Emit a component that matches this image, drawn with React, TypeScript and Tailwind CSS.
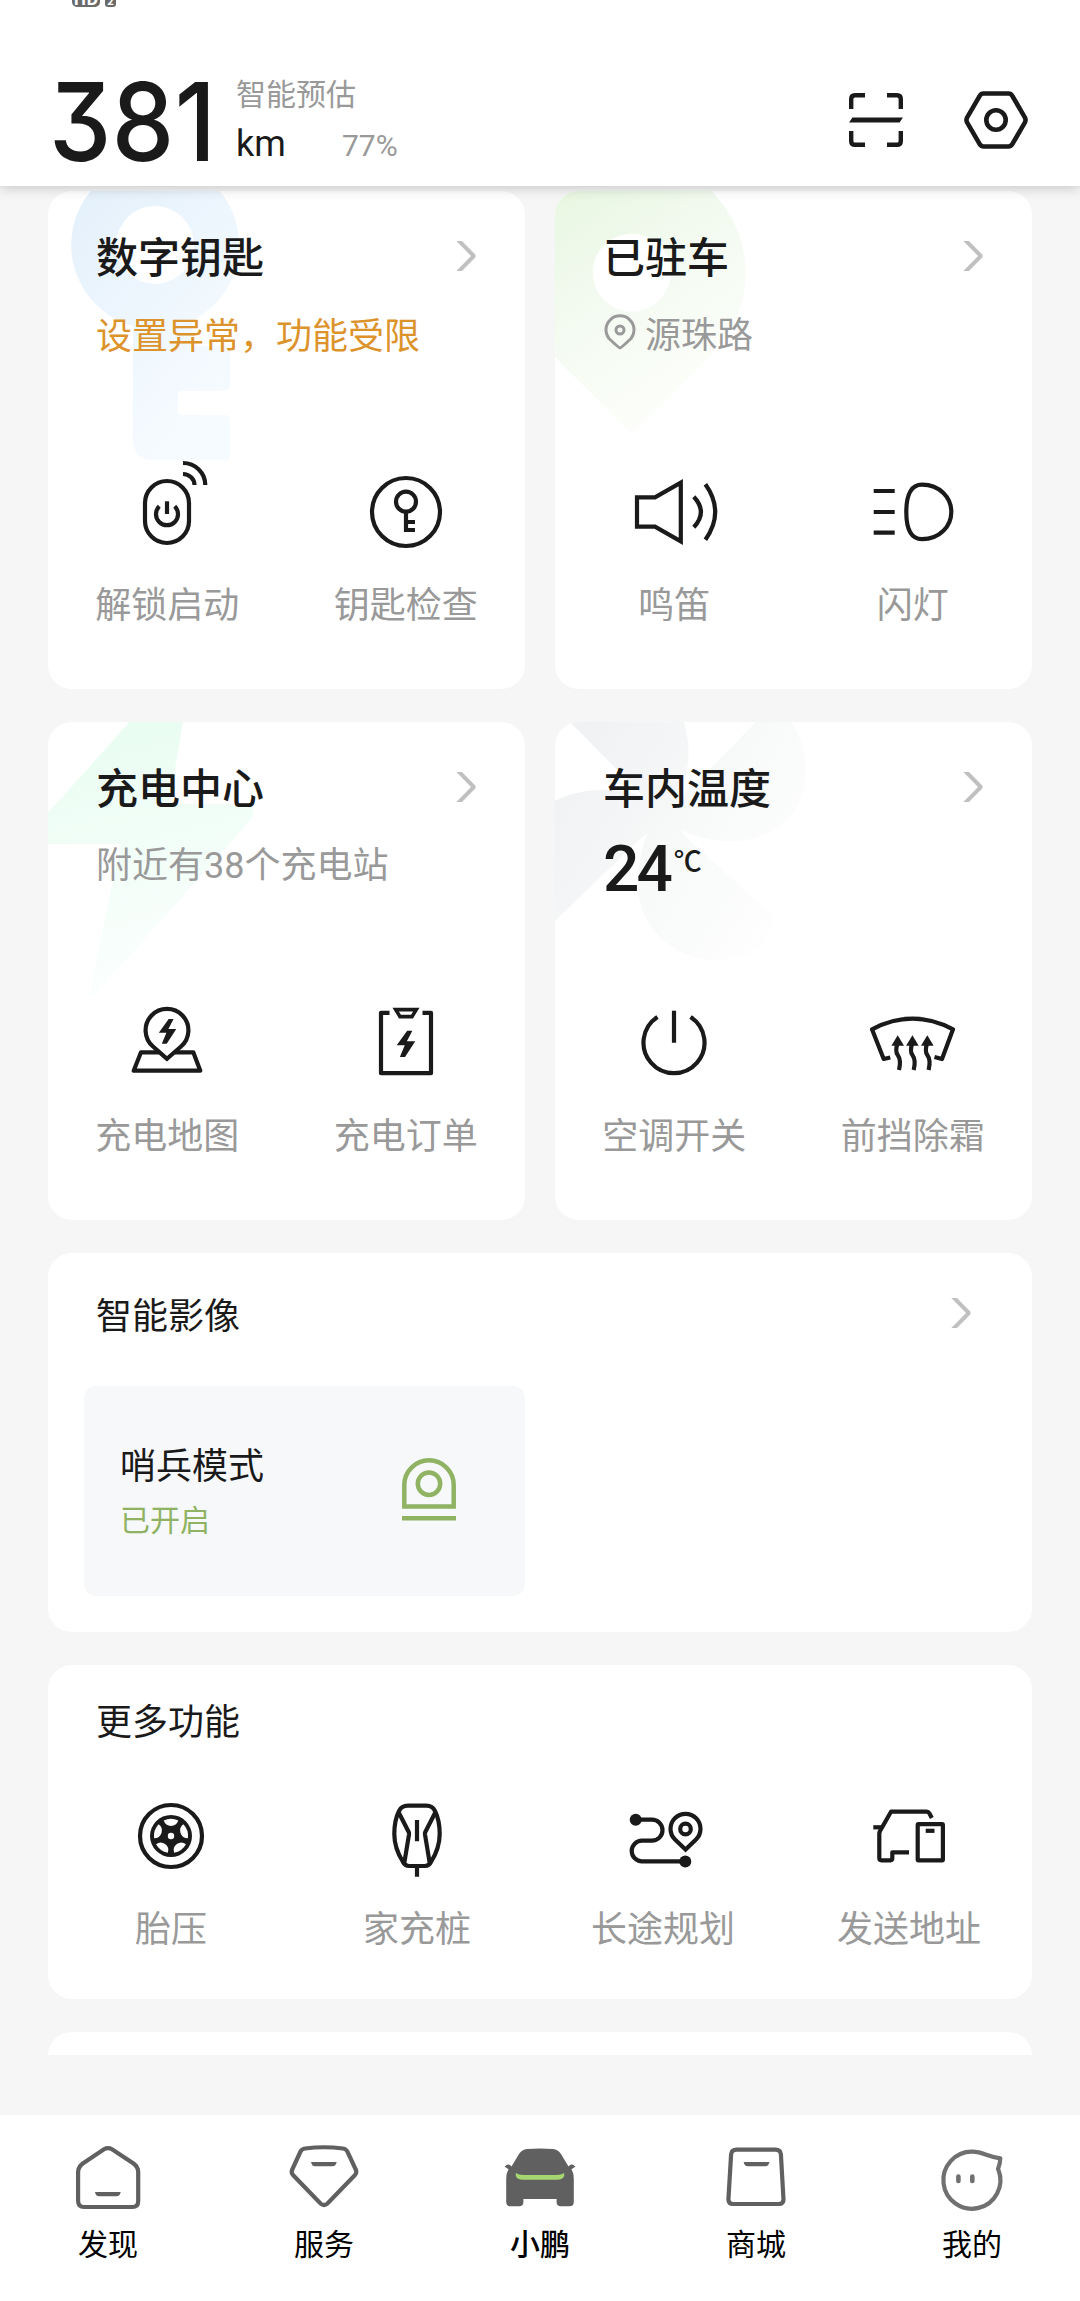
import type { ReactNode } from "react";

type Action = {
  label: string;
  icon: ReactNode;
};

const BOLT = "M49.7 24H54.6L49.4 34H57.3L47.7 48.7H42.8L47.4 37.7H39.8Z";

function Icon({ children }: { children: ReactNode }) {
  return (
    <svg
      viewBox="0 0 96 96"
      fill="none"
      stroke="#1a1a1a"
      strokeWidth="4.2"
      className="w-24 h-24 shrink-0 overflow-visible"
    >
      {children}
    </svg>
  );
}

function Chevron() {
  return (
    <svg viewBox="0 0 20 30" className="w-5 h-[30px] shrink-0">
      <path d="M0.3 0H6L19.500 13.800V16.200L6 30H0.3L15 15Z" fill="#c0c0c0" />
    </svg>
  );
}

/* Faded artwork behind the card titles */
function KeyArt() {
  return (
    <svg viewBox="0 0 477 498" className="absolute inset-0 w-full h-full">
      <defs>
        <linearGradient id="key-art" x1="0" y1="0" x2="0.6" y2="1">
          <stop offset="0%" stopColor="#e2effa" />
          <stop offset="60%" stopColor="#eff7fe" />
          <stop offset="100%" stopColor="#f6fbff" />
        </linearGradient>
      </defs>
      <path
        fillRule="evenodd"
        fill="url(#key-art)"
        d="M107 -30A84 84 0 0 1 144 129.5V155H178Q182 155 182 159V195Q182 200 177 200H134Q129.500 200 129.500 204.500V219Q129.500 224 134 224H177Q182 224 182 229V264Q182 269 177 269H106Q85 269 85 248V135A84 84 0 0 1 107 -30ZM107 15A39 39 0 1 0 107 93A39 39 0 1 0 107 15Z"
      />
    </svg>
  );
}

function PinArt() {
  return (
    <svg viewBox="0 0 477 498" className="absolute inset-0 w-full h-full">
      <defs>
        <linearGradient id="pin-art" x1="0" y1="0" x2="0.55" y2="1">
          <stop offset="0%" stopColor="#e3f5da" />
          <stop offset="50%" stopColor="#f2faef" />
          <stop offset="100%" stopColor="#fdfefb" />
        </linearGradient>
      </defs>
      <path
        fillRule="evenodd"
        fill="url(#pin-art)"
        d="M-4 162.300A114 114 0 1 1 157.300 162.300L80 239.500Q76.700 242 73.500 239.500ZM76.700 42.700A39 39 0 1 0 76.700 120.700A39 39 0 1 0 76.700 42.700Z"
      />
    </svg>
  );
}

function BoltArt() {
  return (
    <svg viewBox="0 0 477 498" className="absolute inset-0 w-full h-full">
      <defs>
        <linearGradient id="bolt-art" x1="0.3" y1="0" x2="0.5" y2="1">
          <stop offset="0%" stopColor="#e9fdf2" />
          <stop offset="60%" stopColor="#f4fef9" />
          <stop offset="100%" stopColor="#fdffff" />
        </linearGradient>
      </defs>
      <path
        fill="url(#bolt-art)"
        d="M81.500 0H135L121 82H202Q208 88 203 97L50 270Q42 279 41 272L73 122H-10V102Z"
      />
    </svg>
  );
}

function FanArt() {
  return (
    <svg viewBox="0 0 477 498" className="absolute inset-0 w-full h-full">
      <defs>
        <linearGradient id="fan-art" x1="0" y1="0.2" x2="1" y2="0.8">
          <stop offset="0%" stopColor="#eff1f3" />
          <stop offset="45%" stopColor="#f7f8f8" />
          <stop offset="100%" stopColor="#ffffff" />
        </linearGradient>
      </defs>
      <path
        fill="url(#fan-art)"
        d="M15 0H129C137 28 134 54 122 78L148 54L201 0H237C256 34 254 64 240 88C216 124 164 126 126 108L130 114L218 194C222 208 206 236 166 238C118 240 80 204 83 156C84 140 87 126 92 112L86 116L-2 201V80C24 66 58 64 88 74Z"
      />
    </svg>
  );
}

const KEY_ACTIONS: Action[] = [
  {
    label: "解锁启动",
    icon: (
      <Icon>
        <rect x="26" y="17" width="44" height="62" rx="22" />
        <path d="M40.300 42.300A11 11 0 1 0 55.700 42.300" />
        <path d="M48 37.300V50" />
        <path d="M64 10A11.500 11 0 0 1 75.500 21M64 -1A22.300 22 0 0 1 86.300 21" />
      </Icon>
    ),
  },
  {
    label: "钥匙检查",
    icon: (
      <Icon>
        <circle cx="48" cy="48" r="34" />
        <circle cx="48" cy="37.7" r="10" />
        <path d="M48 47.700V66H57M48 58H57" />
      </Icon>
    ),
  },
];

const PARK_ACTIONS: Action[] = [
  {
    label: "鸣笛",
    icon: (
      <Icon>
        <path d="M11 33.300H29L54.800 18.700V77.300L29 62.700H11Z" />
        <path d="M67.800 32.700Q82 48 67.800 63.300M79.400 20.300Q99 48 79.400 75.700" />
      </Icon>
    ),
  },
  {
    label: "闪灯",
    icon: (
      <Icon>
        <path d="M8.700 27H29.700M8.700 48H29.700M8.700 68.700H29.700" />
        <path d="M57 20.700C75 20.700 86.300 34 86.300 48S75 75.200 57 75.200C47 75.200 41.300 67 41.300 48S47 20.700 57 20.700Z" />
      </Icon>
    ),
  },
];

const CHARGE_ACTIONS: Action[] = [
  {
    label: "充电地图",
    icon: (
      <Icon>
        <path d="M48 63.800L34 51.500A21.400 21.400 0 1 1 62 51.500Z" />
        <path
          d="M40 57.300H22L14.700 75.700H81.300L74.300 57.300H56"
          strokeLinejoin="round"
        />
        <path d={BOLT} fill="#1a1a1a" stroke="none" />
      </Icon>
    ),
  },
  {
    label: "充电订单",
    icon: (
      <Icon>
        <path d="M31.500 17.800H23V78.200H73V17.800H64.500" strokeLinejoin="round" />
        <path d="M37.700 14.600H58.300L54 21.600H42Z" strokeWidth="3.600" />
        <path
          d={BOLT}
          fill="#1a1a1a"
          stroke="none"
          transform="translate(-3.500 10.300) scale(1.060)"
        />
      </Icon>
    ),
  },
];

const CLIMATE_ACTIONS: Action[] = [
  {
    label: "空调开关",
    icon: (
      <Icon>
        <path d="M31.500 22A30.500 30.500 0 1 0 64.500 22" />
        <path d="M48 15.700V47.700" />
      </Icon>
    ),
  },
  {
    label: "前挡除霜",
    icon: (
      <Icon>
        <path
          d="M25.300 62.500L18.700 64L7 34.300Q47.500 13 88 34.300L77 64L69.500 62"
          strokeLinejoin="round"
        />
        {[32.7, 47.4, 62.3].map((x) => (
          <g key={x} transform={`translate(${x} 0)`}>
            <path d="M0 48C-2.500 55 -1.500 58 0 60S3.500 66 1.300 75" />
            <path d="M0 40.300L6.300 50.700H-6.300Z" fill="#1a1a1a" stroke="none" />
          </g>
        ))}
      </Icon>
    ),
  },
];

const MORE_ACTIONS: Action[] = [
  {
    label: "胎压",
    icon: (
      <Icon>
        <circle cx="48" cy="48" r="31" />
        <circle cx="48" cy="48" r="21" fill="#1a1a1a" stroke="none" />
        {[0, 72, 144, 216, 288].map((deg) => (
          <path
            key={deg}
            d="M40.700 32.600A17 17 0 0 1 55.300 32.600Q53.500 38 48 38Q42.500 38 40.700 32.600Z"
            transform={`rotate(${deg} 48 48)`}
            fill="#ffffff"
            stroke="none"
          />
        ))}
        <circle cx="48" cy="48" r="3.2" fill="#ffffff" stroke="none" />
      </Icon>
    ),
  },
  {
    label: "家充桩",
    icon: (
      <Icon>
        <path d="M39 17.700H57.500Q63.500 17.700 66 23C69.500 30 70.700 37 70.700 46C70.700 55 67 66 62 74Q60 78 56 78H40Q36 78 34 74C29 66 25.300 55 25.300 46C25.300 37 26.500 30 30 23Q32.500 17.700 39 17.700Z" />
        <path d="M30 25L39.700 44Q40.200 45 40 46.500L35.300 75M66 25L56.300 44Q55.800 45 56 46.500L60.700 75" />
        <path d="M48 32V53.300M48 78V88.700" />
      </Icon>
    ),
  },
  {
    label: "长途规划",
    icon: (
      <Icon>
        <path d="M20.700 31.700H37A10.500 10.500 0 0 1 37 52.700H27A10.300 10.300 0 0 0 27 73.300H70.300" />
        <circle cx="20.7" cy="31.7" r="6" fill="#1a1a1a" stroke="none" />
        <circle cx="70.3" cy="73.5" r="6" fill="#1a1a1a" stroke="none" />
        <path d="M70.500 61.500L60 51.500A15 15 0 1 1 81 51.500Z" />
        <circle cx="70.5" cy="41" r="5.300" />
      </Icon>
    ),
  },
  {
    label: "发送地址",
    icon: (
      <Icon>
        <path d="M12.300 39.300H21" />
        <path
          d="M70.800 30L68.500 25.500Q67.500 23.700 65.500 23.700H30L19 43Q18.300 44.500 18.300 46V70Q18.300 72.300 20.500 72.300H29.500Q31.300 72.300 31.300 70V64.300H48"
          strokeLinejoin="round"
        />
        <rect x="56.7" y="36.2" width="25.200" height="36.100" rx="0.800" />
        <path d="M64.700 42.800H73.500" />
      </Icon>
    ),
  },
];

function ActionItem({ label, icon }: Action) {
  return (
    <div className="flex flex-col items-center">
      {icon}
      <span className="mt-[18px] h-12 leading-[48px] text-[36px] text-[#999999] whitespace-nowrap">
        {label}
      </span>
    </div>
  );
}

type CardProps = {
  title: string;
  art: ReactNode;
  actions: Action[];
  children: ReactNode;
};

function FeatureCard({ title, art, actions, children }: CardProps) {
  return (
    <section className="relative h-[498px] rounded-[24px] bg-white overflow-hidden">
      {art}
      <div className="relative">
        <div className="flex items-center justify-between h-[60px] mt-[35px] pl-12 pr-[49px]">
          <h2 className="-mt-[2px] text-[42px] leading-[60px] font-medium text-[#1a1a1a]">
            {title}
          </h2>
          <Chevron />
        </div>
        <div className="flex items-center h-12 mt-[23px] pl-12 text-[36px] leading-[48px] text-[#999999]">
          {children}
        </div>
        <div className="grid grid-cols-2 mt-[107px]">
          {actions.map((action) => (
            <ActionItem key={action.label} {...action} />
          ))}
        </div>
      </div>
    </section>
  );
}

const TABS = [
  {
    label: "发现",
    icon: (
      <>
        <path d="M32 6.300Q36 4 40 6.300L61.500 20.500Q66.200 24 66.200 29V58Q66.200 64 60.500 64H12Q6.100 64 6.100 58V29Q6.100 24 10.800 20.500Z" />
        <path d="M23 49H48.700Q47.800 53.300 44.500 53.300H27Q23.800 53.300 23 49Z" fill="#606060" stroke="none" />
      </>
    ),
  },
  {
    label: "服务",
    icon: (
      <>
        <path d="M17 5.500Q36 3 55 5.500Q58.200 6 59.300 8.500L68 27Q69 30 67 32L39.500 60.500Q36 63.500 32.500 60.500L5 32Q3 30 4 27L12.500 8.500Q13.700 6 17 5.500Z" />
        <path d="M23 19H48.700Q47.800 23.200 44.500 23.200H27Q23.800 23.200 23 19Z" fill="#606060" stroke="none" />
      </>
    ),
  },
  {
    label: "小鹏",
    active: true,
    icon: (
      <>
        <path
          d="M23 6Q36 4.800 49 6Q54 6.500 57 11L64.500 23.500Q66 21 68.500 21.500L71.500 23.500L67.500 26.200Q69.800 30 69.800 36V59Q69.800 63.300 65.500 63.300H57Q52.600 63.300 52.600 59V56H19.400V59Q19.400 63.300 15 63.300H6.500Q2.200 63.300 2.200 59V36Q2.200 30 4.500 26.200L0.500 23.500L3.500 21.500Q6 21 7.500 23.500L15 11Q18 6.500 23 6Z"
          fill="#606060"
          stroke="none"
        />
        <path d="M11.800 30Q15 32 19 32H53Q57 32 60.200 30V33Q59 36.700 53 36.700H19Q13 36.700 11.800 33Z" fill="#a5d670" stroke="none" />
      </>
    ),
  },
  {
    label: "商城",
    icon: (
      <>
        <path d="M16.500 6.700H55.500Q60.500 6.700 60.900 11.500L63.500 56.500Q63.500 61 59 61H13Q8.400 61 8.400 56.500L11.100 11.500Q11.500 6.700 16.500 6.700Z" />
        <path d="M23.600 19H49.500Q48.600 23.200 45.300 23.200H27.600Q24.500 23.200 23.600 19Z" fill="#606060" stroke="none" />
      </>
    ),
  },
  {
    label: "我的",
    icon: (
      <>
        <path
          d="M62.500 27A28.500 28.500 0 1 1 36.500 8.700C47 8.700 52 14 64.300 15.300Q64.300 20 62 26Z"
          stroke="#707070"
          strokeLinejoin="round"
        />
        <path d="M22.400 33.500V38M36.300 33.500V38" stroke="#707070" strokeWidth="4.600" strokeLinecap="round" />
      </>
    ),
  },
];

function Header() {
  return (
    <header className="relative z-10 h-[186px] shrink-0 bg-white shadow-[0_2px_12px_rgba(0,0,0,0.2)]">
      {/* Remainder of the system status bar */}
      <div className="flex h-[7px] items-end gap-[5px] overflow-hidden pl-[72px] text-white font-bold">
        <span className="w-7 h-6 shrink-0 rounded-[5px] bg-[#6b6b6b] text-center text-[17px] leading-[30px]">
          HD
        </span>
        <span className="w-[11px] h-5 shrink-0 rounded-[3px] bg-[#6b6b6b] text-center text-[11px] leading-[27px]">
          2
        </span>
      </div>
      <div className="flex items-center justify-between pl-[49px] pr-[52px] mt-[65px]">
        <div className="flex">
          <span className="w-[187px] h-[95px] leading-[98px] origin-left scale-x-[0.91] font-['Inter'] text-[109px] font-medium tracking-[0.5px] text-[#1a1a1a] [font-feature-settings:'cv09']">
            381
          </span>
          <div className="flex flex-col">
            <span className="h-10 leading-[40px] text-[30px] text-[#999999]">
              智能预估
            </span>
            <div className="flex items-baseline mt-[9px] h-[46px] leading-[46px] font-['Roboto']">
              <span className="w-[106px] text-[36px] text-[#1a1a1a]">km</span>
              <span className="text-[30px] text-[#999999]">77%</span>
            </div>
          </div>
        </div>
        <div className="flex items-center gap-[61px]">
          <svg viewBox="0 0 54 54" fill="none" stroke="#1a1a1a" strokeWidth="4.400" className="w-[54px] h-[54px]">
            <path d="M2.200 16V6Q2.200 2.200 6 2.200H16M38 2.200H48Q51.800 2.200 51.800 6V16M51.800 38V48Q51.800 51.800 48 51.800H38M16 51.800H6Q2.200 51.800 2.200 48V38" />
            <path d="M3.500 24.500H54L50.500 29.500H0Z" fill="#1a1a1a" stroke="none" />
          </svg>
          <svg viewBox="0 0 64 58" fill="none" stroke="#1a1a1a" strokeWidth="4.600" className="w-16 h-[58px]">
            <path d="M19.500 2.500H44.500Q47 2.500 48.300 4.800L61 26.700Q62 29 61 31.300L48.300 53.200Q47 55.500 44.500 55.500H19.500Q17 55.500 15.700 53.200L3 31.300Q2 29 3 26.700L15.700 4.800Q17 2.500 19.500 2.500Z" />
            <circle cx="32" cy="29" r="9.700" />
          </svg>
        </div>
      </div>
    </header>
  );
}

function TabBar() {
  return (
    <nav className="grid grid-cols-5 h-[186px] shrink-0 bg-white pt-7">
      {TABS.map((tab) => (
        <div key={tab.label} className="flex flex-col items-center">
          <svg viewBox="0 0 72 72" fill="none" stroke="#606060" strokeWidth="4.200" className="w-[72px] h-[72px]">
            {tab.icon}
          </svg>
          <span
            className={
              tab.active
                ? "mt-[6px] text-[30px] leading-[42px] font-medium text-black"
                : "mt-[6px] text-[30px] leading-[42px] text-black"
            }
          >
            {tab.label}
          </span>
        </div>
      ))}
    </nav>
  );
}

export default function App() {
  return (
    <div className="flex flex-col w-[1080px] h-[2301px] overflow-hidden bg-[#f6f6f6] font-['Noto_Sans_CJK_SC',sans-serif]">
      <Header />

      <main className="flex flex-col gap-[33px] h-[1869px] mb-[60px] px-12 pt-[5px] overflow-hidden">
        <div className="grid grid-cols-2 gap-x-[30px] gap-y-[33px] shrink-0">
          <FeatureCard title="数字钥匙" art={<KeyArt />} actions={KEY_ACTIONS}>
            <span className="text-[#dc932c]">设置异常，功能受限</span>
          </FeatureCard>
          <FeatureCard title="已驻车" art={<PinArt />} actions={PARK_ACTIONS}>
            <svg viewBox="0 0 32 36" fill="none" stroke="#999999" strokeWidth="3" className="w-8 h-9 ml-[1px] mr-[9px] mb-[2px]">
              <path d="M16 34Q15 34 5 24.500A14 14 0 1 1 27 24.500Q17 34 16 34Z" />
              <circle cx="16" cy="16" r="4" />
            </svg>
            <span className="-mt-[2px]">源珠路</span>
          </FeatureCard>
          <FeatureCard title="充电中心" art={<BoltArt />} actions={CHARGE_ACTIONS}>
            <span>
              附近有<span className="font-['Roboto']">38</span>个充电站
            </span>
          </FeatureCard>
          <FeatureCard title="车内温度" art={<FanArt />} actions={CLIMATE_ACTIONS}>
            <span className="mt-3 font-['Roboto'] text-[64px] font-medium tracking-[-3px] text-[#1a1a1a]">
              24
            </span>
            <span className="ml-1 mb-2 text-[28px] font-medium text-[#1a1a1a]">℃</span>
          </FeatureCard>
        </div>

        <section className="h-[379px] shrink-0 rounded-[24px] bg-white px-9">
          <div className="flex items-center justify-between mt-[33px] h-[54px] pl-3 pr-[25px]">
            <h2 className="text-[36px] leading-[54px] text-[#1a1a1a]">智能影像</h2>
            <Chevron />
          </div>
          <div className="flex items-center justify-between w-[441px] h-[210px] mt-[46px] rounded-[12px] bg-[#f7f8fa] pl-9 pr-[69px]">
            <div className="flex flex-col">
              <span className="h-[54px] leading-[52px] text-[36px] text-[#1a1a1a]">
                哨兵模式
              </span>
              <span className="h-[54px] leading-[54px] text-[30px] text-[#8fb363]">
                已开启
              </span>
            </div>
            <svg viewBox="0 0 54 63" fill="none" stroke="#8fb363" strokeWidth="4.500" className="w-[54px] h-[63px] mb-1">
              <path d="M2.300 48.500V27A24.700 24.700 0 0 1 51.700 27V48.500ZM0 60.300H54" />
              <circle cx="27" cy="25.700" r="11.200" />
            </svg>
          </div>
        </section>

        <section className="h-[334px] shrink-0 rounded-[24px] bg-white">
          <h2 className="mt-[27px] h-[54px] pl-12 text-[36px] leading-[54px] text-[#1a1a1a]">
            更多功能
          </h2>
          <div className="grid grid-cols-4 mt-[42px]">
            {MORE_ACTIONS.map((action) => (
              <ActionItem key={action.label} {...action} />
            ))}
          </div>
        </section>

        <section className="h-[120px] shrink-0 rounded-[24px] bg-white" />
      </main>

      <TabBar />
    </div>
  );
}
